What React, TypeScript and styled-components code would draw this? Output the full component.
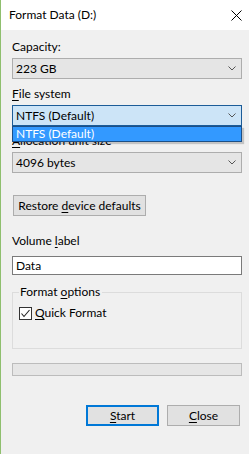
import styled, { createGlobalStyle } from "styled-components";

const GlobalStyle = createGlobalStyle`
    html, body {
        margin: 0;
        padding: 0;
        background: #f0f0f0;
    }
    body {
        font-family: Lato, "Noto Sans", sans-serif;
        font-size: 12px;
        color: #000;
    }
`;

const Window = styled.div`
    width: 249px;
    height: 454px;
    box-sizing: border-box;
    border-left: 1px solid #8fbf6e;
    background: #f0f0f0;
    display: flex;
    flex-direction: column;
    overflow: hidden;
`;

const TitleBar = styled.div`
    height: 30px;
    flex: none;
    background: #fff;
    display: flex;
    align-items: center;
    justify-content: space-between;
    padding: 0 7px 0 8px;
`;

const Title = styled.span`
    line-height: 16px;
`;

const Body = styled.div`
    position: relative;
    display: flex;
    flex-direction: column;
    padding: 9px 7px 0 11px;
`;

const Label = styled.div<{ $gap?: number; $top?: number }>`
    height: 16px;
    line-height: 16px;
    margin-top: ${(p) => p.$top ?? 0}px;
    margin-bottom: ${(p) => p.$gap ?? 3}px;
    white-space: nowrap;
`;

const U = styled.span`
    text-decoration: underline;
    text-underline-offset: 2px;
`;

const Combo = styled.div<{ $focused?: boolean }>`
    height: 21px;
    box-sizing: border-box;
    margin-bottom: 7px;
    border: 1px solid ${(p) => (p.$focused ? "#1c5c98" : "#adadad")};
    background: ${(p) => (p.$focused ? "#cce4f7" : "#e5e5e5")};
    display: flex;
    align-items: center;
    justify-content: space-between;
    padding: 0 5px 0 3px;
    line-height: 16px;
`;

const DropList = styled.div`
    position: absolute;
    left: 11px;
    right: 7px;
    top: 96px;
    height: 16px;
    box-sizing: border-box;
    border: 1px solid #1c4f86;
    background: #3399ff;
    color: #fff;
    line-height: 14px;
    padding-left: 3px;
    box-shadow: 2px 2px 1px rgba(0, 0, 0, 0.18);
`;

const Button = styled.div<{ $width: number; $default?: boolean }>`
    width: ${(p) => p.$width}px;
    height: 21px;
    box-sizing: border-box;
    border: ${(p) => (p.$default ? "2px solid #0078d7" : "1px solid #adadad")};
    background: #e1e1e1;
    display: flex;
    align-items: center;
    justify-content: center;
    line-height: 16px;
`;

const RestoreButton = styled(Button)`
    margin-top: 15px;
    margin-left: 1px;
`;

const TextBox = styled.div`
    height: 19px;
    box-sizing: border-box;
    border: 1px solid #7a7a7a;
    background: #fff;
    display: flex;
    align-items: center;
    padding-left: 3px;
    line-height: 16px;
`;

const GroupBox = styled.fieldset`
    margin: 9px 0 0 0;
    height: 65px;
    box-sizing: border-box;
    border: 1px solid #dcdcdc;
    padding: 5px 6px 0 6px;
    min-width: 0;
`;

const Legend = styled.legend`
    padding: 0 2px 0 1px;
    line-height: 16px;
`;

const CheckRow = styled.div`
    display: flex;
    align-items: center;
    gap: 3px;
    line-height: 16px;
`;

const CheckBox = styled.div`
    width: 13px;
    height: 13px;
    box-sizing: border-box;
    border: 1px solid #333;
    background: #fff;
    display: flex;
    align-items: center;
    justify-content: center;
`;

const Progress = styled.div`
    margin-top: 14px;
    height: 13px;
    box-sizing: border-box;
    border: 1px solid #bcbcbc;
    background: #e6e6e6;
`;

const ButtonRow = styled.div`
    margin-top: 29px;
    display: flex;
    justify-content: flex-end;
    gap: 8px;
    padding-right: 2px;
`;

function Chevron() {
    return (
        <svg width="8" height="5" viewBox="0 0 8 5">
            <path d="M0.5 0.5 L4 4 L7.5 0.5" fill="none" stroke="#555" strokeWidth="1" />
        </svg>
    );
}

export default function App() {
    return (
        <>
            <GlobalStyle />
            <Window>
                <TitleBar>
                    <Title>Format Data (D:)</Title>
                    <svg width="11" height="11" viewBox="0 0 11 11">
                        <path d="M0.5 0.5 L10.5 10.5 M10.5 0.5 L0.5 10.5" stroke="#000" strokeWidth="1" />
                    </svg>
                </TitleBar>
                <Body>
                    <Label>Capacity:</Label>
                    <Combo>
                        <span>223 GB</span>
                        <Chevron />
                    </Combo>
                    <Label>
                        <U>F</U>ile system
                    </Label>
                    <Combo $focused>
                        <span>NTFS (Default)</span>
                        <Chevron />
                    </Combo>
                    <DropList>NTFS (Default)</DropList>
                    <Label>
                        <U>A</U>llocation unit size
                    </Label>
                    <Combo>
                        <span>4096 bytes</span>
                        <Chevron />
                    </Combo>
                    <RestoreButton $width={133}>
                        <span>
                            Restore <U>d</U>evice defaults
                        </span>
                    </RestoreButton>
                    <Label $gap={7} $top={17}>
                        Volume <U>l</U>abel
                    </Label>
                    <TextBox>Data</TextBox>
                    <GroupBox>
                        <Legend>
                            Format <U>o</U>ptions
                        </Legend>
                        <CheckRow>
                            <CheckBox>
                                <svg width="11" height="11" viewBox="0 0 11 11">
                                    <path d="M1.5 5.5 L4 8.5 L9.5 2" fill="none" stroke="#222" strokeWidth="1.1" />
                                </svg>
                            </CheckBox>
                            <span>
                                <U>Q</U>uick Format
                            </span>
                        </CheckRow>
                    </GroupBox>
                    <Progress />
                    <ButtonRow>
                        <Button $width={73} $default>
                            <span>
                                <U>S</U>tart
                            </span>
                        </Button>
                        <Button $width={73}>
                            <span>
                                <U>C</U>lose
                            </span>
                        </Button>
                    </ButtonRow>
                </Body>
            </Window>
        </>
    );
}
